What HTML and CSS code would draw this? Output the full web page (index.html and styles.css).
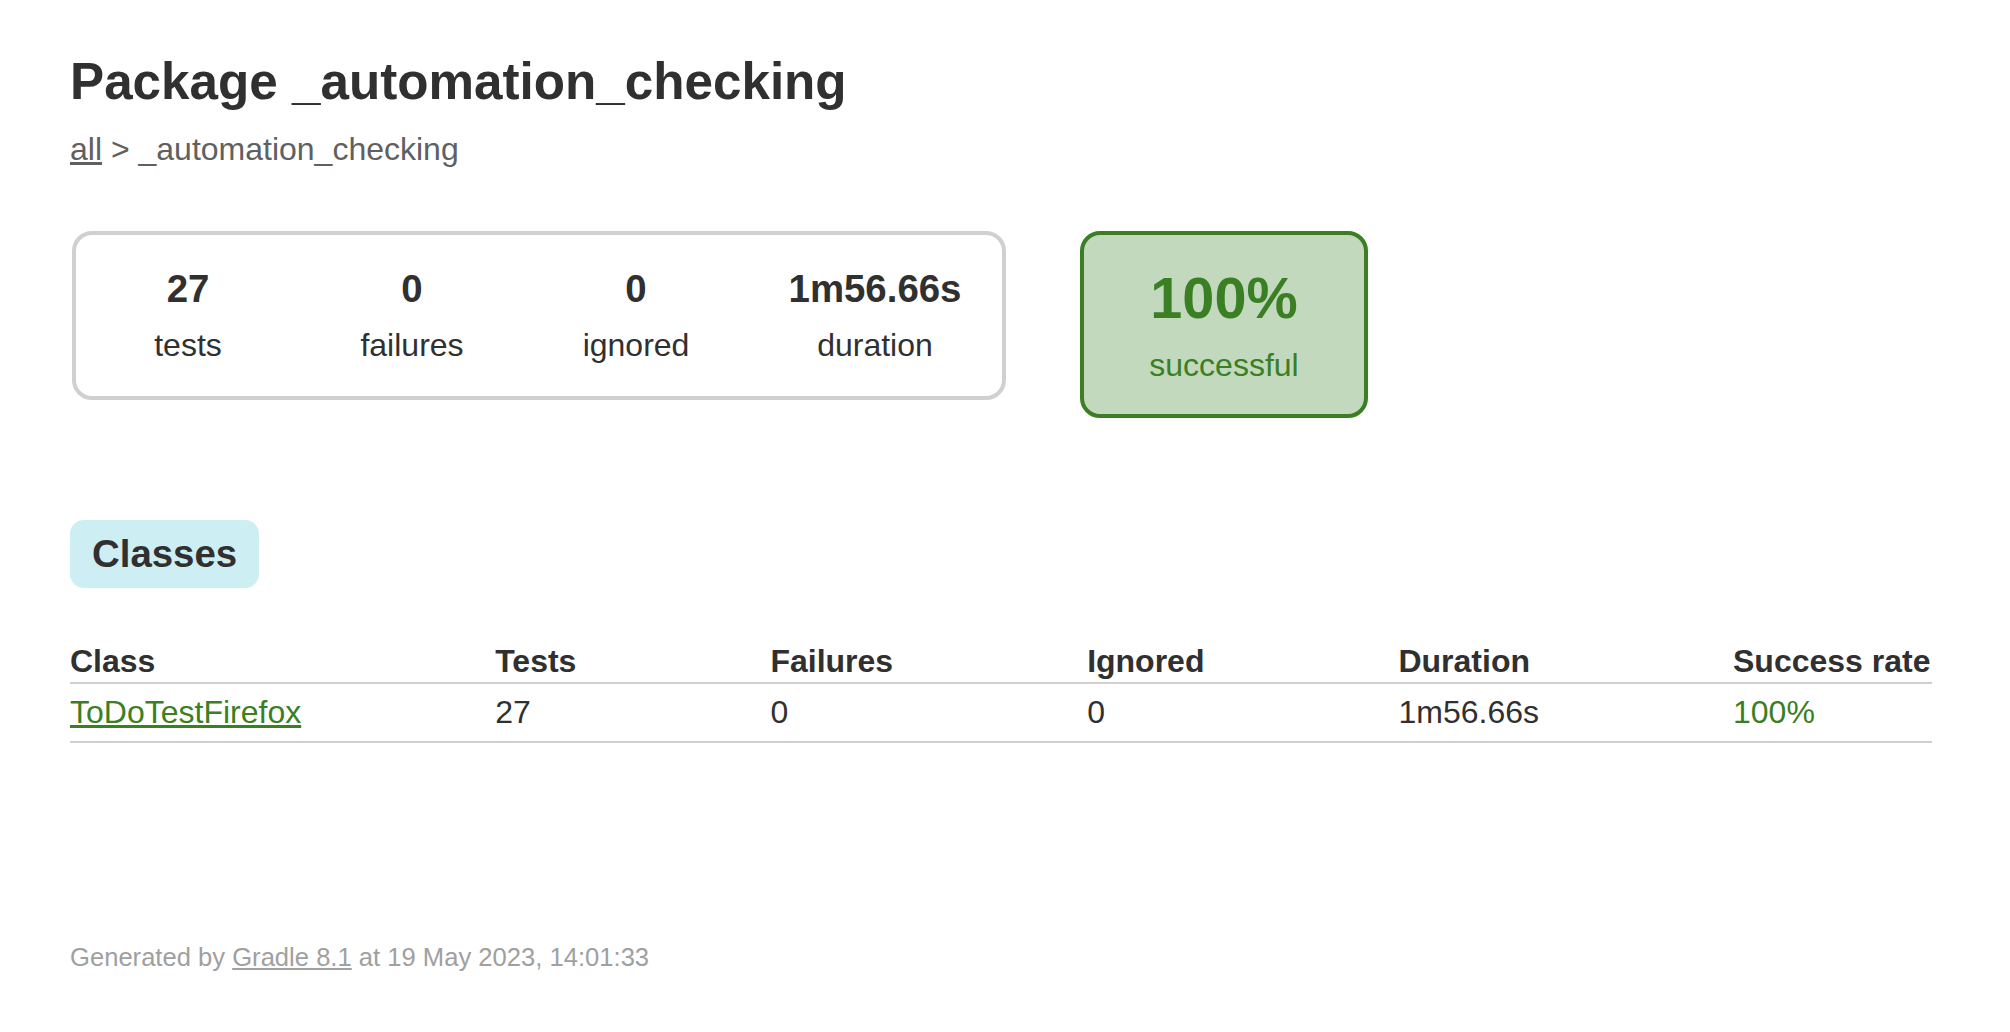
FILE: index.html
```html
<!DOCTYPE html>
<html>
<head>
<meta charset="utf-8">
<title>Test results - Package _automation_checking</title>
<link rel="stylesheet" href="styles.css">
</head>
<body>
<div class="content">
  <h1 class="title">Package _automation_checking</h1>
  <div class="breadcrumbs"><a href="#">all</a> &gt; _automation_checking</div>

  <div class="summary">
    <div class="summary-group">
      <div class="info-box">
        <div class="counter">27</div>
        <p class="info-label">tests</p>
      </div>
      <div class="info-box">
        <div class="counter">0</div>
        <p class="info-label">failures</p>
      </div>
      <div class="info-box">
        <div class="counter">0</div>
        <p class="info-label">ignored</p>
      </div>
      <div class="info-box info-duration">
        <div class="counter">1m56.66s</div>
        <p class="info-label">duration</p>
      </div>
    </div>
    <div class="success-rate">
      <div class="percent">100%</div>
      <p class="info-label">successful</p>
    </div>
  </div>

  <ul class="tab-links">
    <li class="tab-link selected"><h2 class="tab-title">Classes</h2></li>
  </ul>

  <table class="results">
    <thead>
      <tr>
        <th class="col">Class</th>
        <th class="col">Tests</th>
        <th class="col">Failures</th>
        <th class="col">Ignored</th>
        <th class="col">Duration</th>
        <th class="col">Success rate</th>
      </tr>
    </thead>
    <tbody>
      <tr>
        <td class="cell"><a class="green-link" href="#">ToDoTestFirefox</a></td>
        <td class="cell">27</td>
        <td class="cell">0</td>
        <td class="cell">0</td>
        <td class="cell">1m56.66s</td>
        <td class="cell green">100%</td>
      </tr>
    </tbody>
  </table>

  <div class="footer">Generated by <a href="#">Gradle 8.1</a> at 19 May 2023, 14:01:33</div>
</div>
</body>
</html>
```

FILE: styles.css
```css
html, body {
  margin: 0;
  padding: 0;
  background: #ffffff;
}

body {
  font-family: "Liberation Sans", Arial, Helvetica, sans-serif;
  font-size: 32px;
  color: #303030;
}

.content {
  padding: 52px 78px 60px 70px;
}

.title {
  font-size: 51.2px;
  font-weight: bold;
  margin: 0 0 20px 0;
  white-space: nowrap;
  line-height: normal;
}

.breadcrumbs,
.breadcrumbs a {
  color: #606060;
}

.summary {
  display: flex;
  align-items: flex-start;
  margin: 61px 0 80px 0;
  padding: 2px;
}

.summary-group {
  display: flex;
  border: 4px solid #d0d0d0;
  border-radius: 20px;
}

.info-box {
  width: 220px;
  margin: 2px;
  padding: 30px 0;
  text-align: center;
}

.info-duration {
  width: 250px;
}

.counter {
  font-size: 38.4px;
  font-weight: bold;
  margin-bottom: 16px;
}

.info-label {
  margin: 0;
}

.success-rate {
  width: 280px;
  margin-left: 74px;
  padding: 30px 0;
  text-align: center;
  border: 4px solid #3a7f23;
  border-radius: 20px;
  background: #c3d9bd;
  color: #3a7f23;
}

.percent {
  font-size: 57.6px;
  font-weight: bold;
  margin-bottom: 16px;
}

.tab-links {
  display: flex;
  list-style: none;
  margin: 0 0 33px 0;
  padding: 20px 0;
}

.tab-link {
  padding: 10px 20px;
  border: 2px solid #cdeef3;
  background: #cdeef3;
  border-radius: 14px;
}

.tab-title {
  margin: 0;
  padding: 0;
  font-size: 38.4px;
  font-weight: bold;
  white-space: nowrap;
}

.results {
  border-collapse: collapse;
  border-bottom: 2px solid #d0d0d0;
}

.col {
  text-align: left;
  white-space: nowrap;
  font-weight: bold;
  padding: 2px 2px 2px 192px;
  border-bottom: 2px solid #d0d0d0;
}

.cell {
  white-space: nowrap;
  padding: 10px 2px 10px 192px;
}

.col:first-child,
.cell:first-child {
  padding-left: 0;
}

.green,
.green-link {
  color: #3a7f23;
}

.footer {
  margin-top: 200px;
  font-size: 25.6px;
  white-space: nowrap;
}

.footer,
.footer a {
  color: #a0a0a0;
}
```
